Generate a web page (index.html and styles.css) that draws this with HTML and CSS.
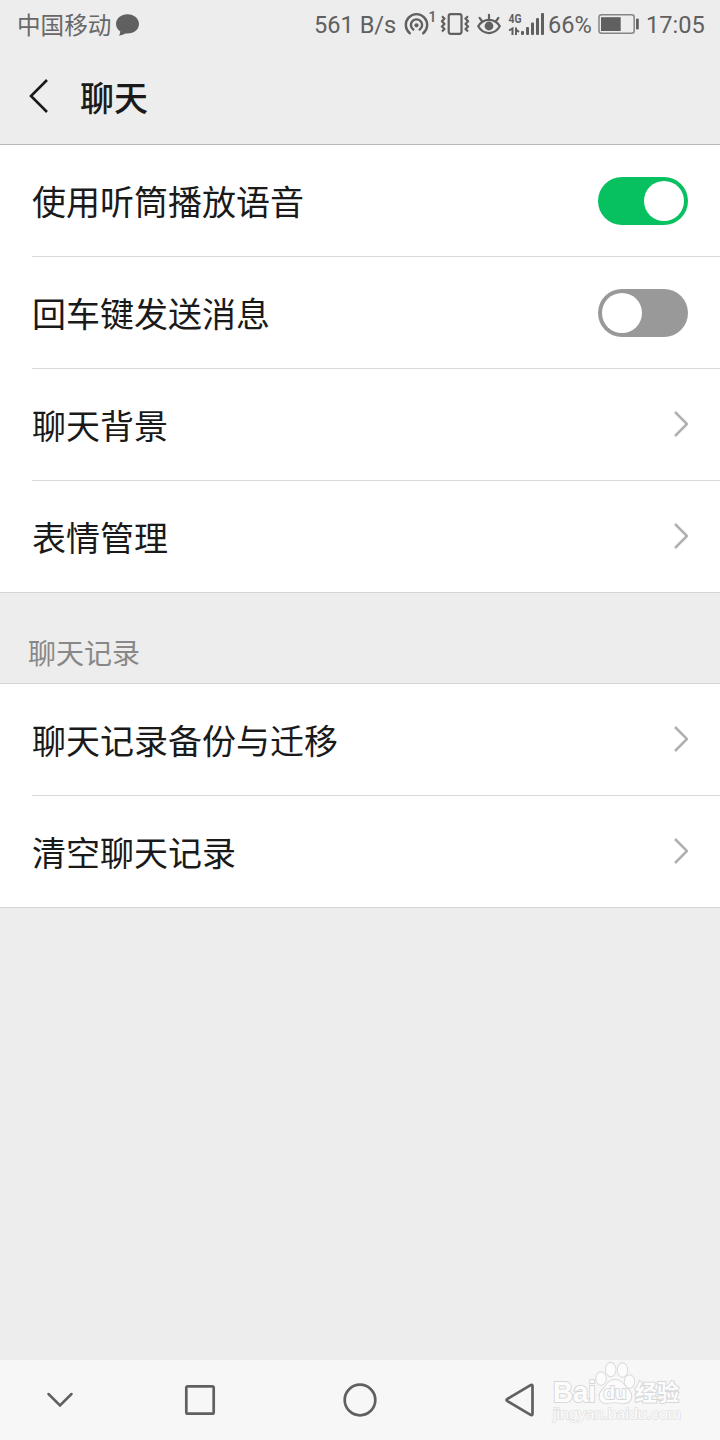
FILE: index.html
```html
<!DOCTYPE html>
<html lang="zh-CN">
<head>
  <meta charset="UTF-8" />
  <meta name="viewport" content="width=device-width, initial-scale=1.0" />
  <title>聊天</title>
  <link rel="stylesheet" href="styles.css">
</head>
<body>

  <div class="status-bar">
    <span class="carrier">中国移动</span>
    <svg class="bubble" width="24" height="48" viewBox="0 0 24 48">
      <path d="M12.500 14.300C6 14.300 1 18.600 1 24c0 3.200 1.700 5.800 4.300 7.400-.1 1.600-.6 2.900-1.300 4 2.800-.3 4.800-1 6.300-2 .7.1 1.400.1 2.200.1 6.500 0 11.500-4.100 11.500-9.500S19 14.300 12.500 14.300z" fill="#606060"/>
    </svg>

    <div class="status-icons">
      <span class="speed">561 B/s</span>
      <svg class="hotspot" width="34" height="48" viewBox="0 0 34 48">
        <g fill="none" stroke="#606060" stroke-width="2.400" stroke-linecap="round">
          <path d="M5.800 33.200A10.700 10.700 0 1 1 19.200 33.200"/>
          <path d="M9.300 29.600A5.600 5.600 0 1 1 15.700 29.600"/>
        </g>
        <circle cx="12.500" cy="25.300" r="2.100" fill="#606060"/>
        <text x="24.500" y="22" class="sup">1</text>
      </svg>
      <svg class="vibrate" width="30" height="48" viewBox="0 0 30 48">
        <g fill="none" stroke="#606060" stroke-width="2.200">
          <rect x="8.700" y="14.200" width="12.800" height="19.600" rx="2"/>
          <path d="M2 16.200l2.400 2.300L2 21.200l2.400 2.700L2 26.500l2.400 2.600L2 31.600"/>
          <path d="M28 16.200l-2.400 2.300 2.400 2.700-2.400 2.700 2.400 2.600-2.400 2.600 2.400 2.500"/>
        </g>
      </svg>
      <svg class="eye" width="24" height="48" viewBox="0 0 24 48">
        <g fill="none" stroke="#606060" stroke-width="2.200" stroke-linecap="round">
          <path d="M1.200 26.300C6.500 17.800 17.500 17.800 22.800 26.300 17.500 35.300 6.500 35.300 1.200 26.300z"/>
          <path d="M12 14.800v4.500M2.600 17.800l2.600 3.700M21.400 17.800l-2.600 3.700"/>
        </g>
        <circle cx="12" cy="26" r="4.400" fill="#606060"/>
      </svg>
      <svg class="signal" width="36" height="48" viewBox="0 0 36 48">
        <text x="0.500" y="23" class="net" textLength="13" lengthAdjust="spacingAndGlyphs">4G</text>
        <path d="M1 30.500L4.500 28.500v6.500M8 27.500v7.500M8 29.500l3 2.500" fill="none" stroke="#606060" stroke-width="2"/>
        <g fill="#606060">
          <rect x="13" y="31" width="3" height="4" rx="1"/>
          <rect x="18" y="27" width="3" height="8" rx="1"/>
          <rect x="23" y="22.500" width="3" height="12.500" rx="1"/>
          <rect x="28" y="18" width="3" height="17" rx="1"/>
          <rect x="33" y="13" width="3" height="22" rx="1"/>
        </g>
      </svg>
      <span class="percent">66%</span>
      <svg class="battery" width="42" height="48" viewBox="0 0 42 48">
        <rect x="1" y="14.800" width="35.200" height="18.400" rx="2.500" fill="none" stroke="#858585" stroke-width="1.500"/>
        <rect x="3" y="17.200" width="19.700" height="13.800" fill="#606060"/>
        <rect x="38" y="18.500" width="2.800" height="11" rx="1" fill="#606060"/>
      </svg>
      <span class="time">17:05</span>
    </div>
  </div>

  <header class="title-bar">
    <svg width="24" height="40" viewBox="0 0 24 40">
      <path d="M19 4L3 20l16 16" fill="none" stroke="#1a1a1a" stroke-width="2.600"/>
    </svg>
    <h1>聊天</h1>
  </header>

  <ul class="list">
    <li>
      <span>使用听筒播放语音</span>
      <div class="switch on"></div>
    </li>
    <li>
      <span>回车键发送消息</span>
      <div class="switch"></div>
    </li>
    <li>
      <span>聊天背景</span>
      <svg class="arrow" viewBox="0 0 16 28"><path d="M3 1l12 12L3 25"/></svg>
    </li>
    <li>
      <span>表情管理</span>
      <svg class="arrow" viewBox="0 0 16 28"><path d="M3 1l12 12L3 25"/></svg>
    </li>
  </ul>

  <h2 class="section-title">聊天记录</h2>

  <ul class="list">
    <li>
      <span>聊天记录备份与迁移</span>
      <svg class="arrow" viewBox="0 0 16 28"><path d="M3 1l12 12L3 25"/></svg>
    </li>
    <li>
      <span>清空聊天记录</span>
      <svg class="arrow" viewBox="0 0 16 28"><path d="M3 1l12 12L3 25"/></svg>
    </li>
  </ul>

  <nav class="nav-bar">
    <svg class="nav-hide" viewBox="0 0 40 40"><path d="M8.500 14l11.500 11.500L31.500 14" stroke-width="2.500"/></svg>
    <svg viewBox="0 0 40 40"><rect x="6.300" y="6.300" width="27.400" height="27.400" rx="1.500"/></svg>
    <svg viewBox="0 0 40 40"><circle cx="20" cy="20" r="15.300"/></svg>
    <svg viewBox="0 0 40 40"><path d="M7.500 18.800L30.600 5.200q1.900-1 1.900 1.100V33.700q0 2.100-1.900 1.100L7.500 21.200q-2-1.200 0-2.400z"/></svg>

    <svg class="watermark" width="140" height="70" viewBox="0 0 140 70">
      <text x="4" y="41" class="wm-logo" textLength="43" lengthAdjust="spacingAndGlyphs">Bai</text>
      <g class="wm-paw">
        <ellipse cx="52" cy="17.500" rx="4.800" ry="6.300"/>
        <ellipse cx="61.700" cy="8.500" rx="4.800" ry="6.800"/>
        <ellipse cx="73.500" cy="9" rx="4.800" ry="6.800"/>
        <ellipse cx="80.500" cy="20.500" rx="4.800" ry="6.300"/>
        <path d="M66 19c-7 0-8.500 6-12.500 10C48.500 34 50 42 57 42c4 0 5-.8 9-.8s5 .8 9 .8c7.500 0 9.500-8 4.500-13C75 25 73 19 66 19z"/>
      </g>
      <text x="54.500" y="37.500" class="wm-du" textLength="23" lengthAdjust="spacingAndGlyphs">du</text>
      <text x="86" y="39" class="wm-cn">经验</text>
      <text x="4" y="58" class="wm-url" textLength="128" lengthAdjust="spacingAndGlyphs">jingyan.baidu.com</text>
    </svg>
  </nav>

</body>
</html>
```
FILE: styles.css
```css
* {
  box-sizing: border-box;
}

body {
  margin: 0;
  min-height: 100vh;
  display: flex;
  flex-direction: column;
  background: #ededed;
  color: #1a1a1a;
  font-family: Roboto, "Noto Sans CJK SC", sans-serif;
}

svg {
  display: block;
  flex-shrink: 0;
}

/* Status bar */
.status-bar {
  height: 48px;
  padding: 0 14px 0 17px;
  display: flex;
  line-height: 51px;
  font-size: 23.6px;
  color: #606060;
  white-space: nowrap;
}

.carrier {
  width: 98px;
  line-height: 53px;
  color: #686868;
}

.status-icons {
  margin-left: auto;
  display: flex;
}

.speed { width: 90px; }
.hotspot { margin-right: 2px; }
.vibrate { margin-right: 7px; }
.eye { margin-right: 7px; }
.signal { margin-right: 4px; }
.percent { width: 50px; }
.battery { margin-right: 6px; }
.time { width: 60px; }

.sup {
  font-size: 14px;
  font-weight: 500;
  fill: #606060;
}

.net {
  font-size: 13.5px;
  font-weight: 700;
  fill: #606060;
}

/* Title */
.title-bar {
  height: 97px;
  padding: 0 28px;
  display: flex;
  align-items: center;
  gap: 28px;
  border-bottom: 1px solid #b9b9b9;
}

.title-bar h1 {
  margin: 0;
  font-size: 34px;
  font-weight: 500;
}

/* Settings list */
.list {
  margin: 0;
  padding: 0 0 0 32px;
  list-style: none;
  background: #fff;
  border-bottom: 1px solid #d5d5d5;
}

.list li {
  height: 112px;
  padding-right: 32px;
  display: flex;
  align-items: center;
  justify-content: space-between;
  border-bottom: 1px solid #d9d9d9;
  font-size: 34px;
}

.list li:last-child {
  height: 111px;
  border-bottom: none;
}

.arrow {
  width: 16px;
  height: 28px;
  fill: none;
  stroke: #b0b0b0;
  stroke-width: 2.6;
}

.switch {
  width: 90px;
  height: 48px;
  padding: 4px;
  display: flex;
  border-radius: 24px;
  background: #999;
}

.switch::after {
  content: "";
  width: 40px;
  height: 40px;
  border-radius: 50%;
  background: #fff;
}

.switch.on {
  justify-content: flex-end;
  background: #07c160;
}

.section-title {
  margin: 0;
  height: 91px;
  padding: 41px 28px 0;
  border-bottom: 1px solid #d5d5d5;
  font-size: 28px;
  font-weight: 400;
  line-height: 42px;
  color: #888;
}

/* Navigation bar */
.nav-bar {
  position: relative;
  height: 80px;
  margin-top: auto;
  padding: 0 40px;
  display: flex;
  align-items: center;
  gap: 120px;
  background: #f7f7f7;
  fill: none;
  stroke: #606060;
  stroke-width: 2.7;
}

.nav-bar > svg:not(.watermark) {
  width: 40px;
  height: 40px;
}

.nav-hide {
  margin-right: -20px;
  stroke-linecap: round;
}

.watermark {
  position: absolute;
  right: 31px;
  bottom: 9px;
  fill: #fcfcfc;
  stroke: #d8d8d8;
  stroke-width: 2;
  paint-order: stroke;
}

.wm-paw {
  stroke-width: 1.8;
}

.wm-logo {
  font: 700 29px "Liberation Sans", sans-serif;
}

.wm-du {
  font: 700 19px "Liberation Sans", sans-serif;
}

.wm-cn {
  font: 700 22px "Noto Sans CJK SC", sans-serif;
}

.wm-url {
  font: 400 15px "Liberation Sans", sans-serif;
  stroke: #e2e2e2;
  stroke-width: 1.5;
}
```
